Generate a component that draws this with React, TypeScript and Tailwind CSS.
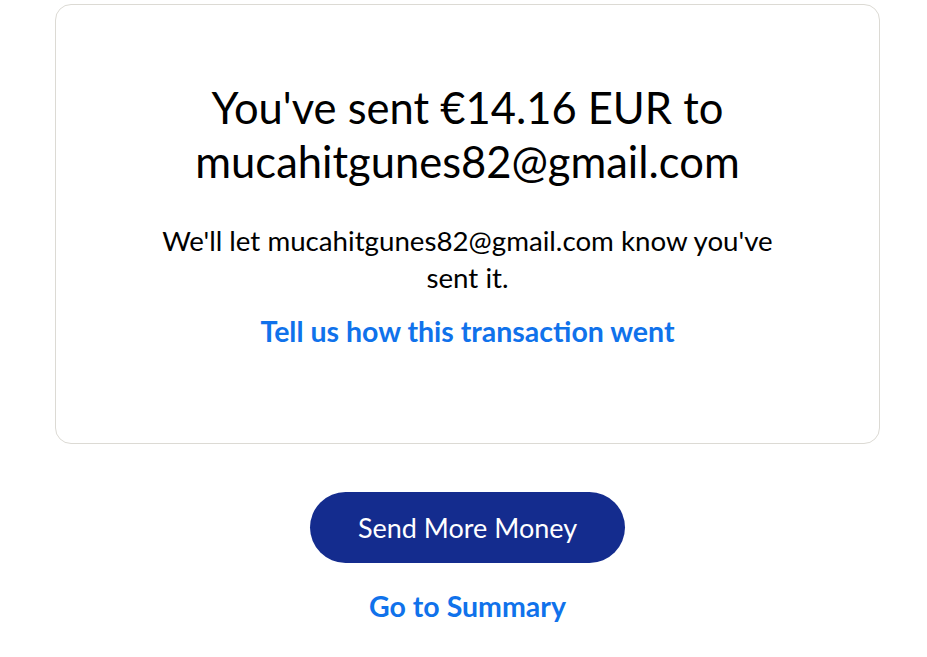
export default function App() {
  return (
    <div className="min-h-[657px] w-[927px] bg-white font-['Lato',sans-serif] text-black">
      <div className="pt-[4px] pl-[55px]">
        <div className="w-[825px] h-[440px] rounded-[16px] border border-[#dcdad4] flex flex-col items-center pt-[75px]">
          <h1 className="text-[43.5px] leading-[54px] text-center font-normal w-[640px]">
            You've sent €14.16 EUR to mucahitgunes82@gmail.com
          </h1>
          <p className="mt-[34px] text-[27.7px] leading-[37px] text-center w-[660px]">
            We'll let mucahitgunes82@gmail.com know you've sent it.
          </p>
          <a className="mt-[19px] text-[28.5px] leading-[32px] font-bold text-[#1072eb]">
            Tell us how this transaction went
          </a>
        </div>
      </div>
      <div className="flex flex-col items-center pl-[8px] mt-[48px]">
        <button className="w-[315px] h-[71px] rounded-full bg-[#142c8e] text-white text-[27px] pt-[2px]">
          Send More Money
        </button>
        <a className="mt-[27px] text-[28.5px] leading-[32px] font-bold text-[#1072eb]">Go to Summary</a>
      </div>
    </div>
  );
}
